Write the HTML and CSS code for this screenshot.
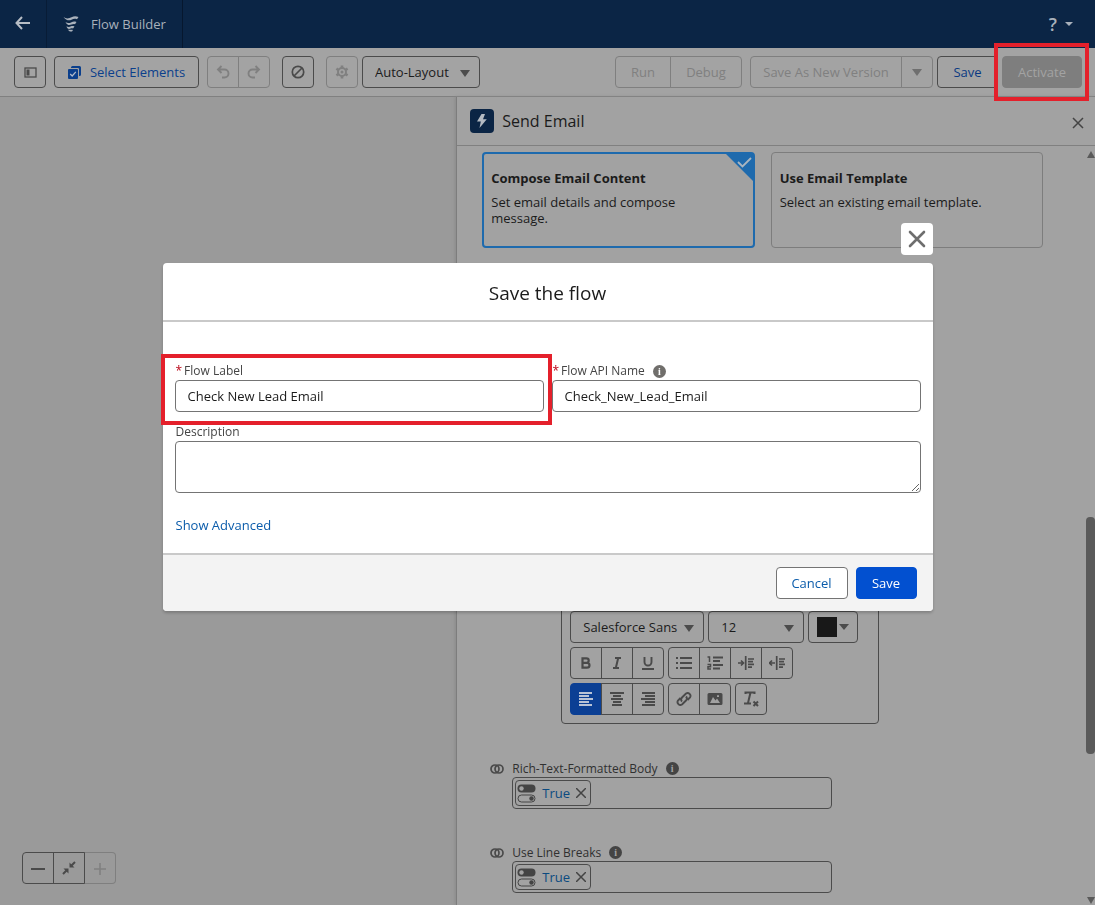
FILE: index.html
```html
<!DOCTYPE html>
<html lang="en">

<head>
  <meta charset="UTF-8" />
  <meta name="viewport" content="width=device-width, initial-scale=1.0" />
  <title>Flow Builder</title>
  <link rel="stylesheet" href="styles.css">
</head>

<body>

  <div class="app">

    <header class="top-bar">
      <a class="back" href="#" aria-label="Back">
        <svg width="16" height="14" viewBox="0 0 16 14" fill="none" stroke="currentColor" stroke-width="2"><path d="M15 7H2M7 1L1.500 7L7 13" /></svg>
      </a>
      <div class="brand">
        <svg width="16" height="16" viewBox="0 0 16 16" fill="currentColor"><path d="M.5 1C3 3 6 2.600 8.500 1.200C11 0 13 0 15.500 1L14 3.200C12 2.400 10.500 2.600 8.500 3.700C6 5 3 4.500 .5 1ZM2.500 6C4.500 7.600 6.500 7.200 8.500 6.200C10 5.400 11.500 5.300 13.500 6L12 8.200C10.800 7.800 9.800 8 8.500 8.600C6 9.700 4 9 2.500 6ZM3.500 10.200C5 11.200 6.500 11 8 10.300C9 9.900 10 9.900 11.500 10.400L10 12.400C8 12 7.500 13 6 12.900C4.800 12.700 4 12 3.500 10.200ZM5 13.600C6.500 14.300 8 13.200 10 13.900L9 15.500C7.500 15.600 6 16 5 13.600Z" /></svg>
        <span>Flow Builder</span>
      </div>
      <button type="button" class="help" aria-label="Help">?<span class="caret caret-small"></span></button>
    </header>

    <div class="toolbar">
      <button type="button" class="btn icon-btn" aria-label="Toggle toolbox">
        <svg width="13" height="11" viewBox="0 0 13 11"><rect x="1" y="1" width="11" height="9" fill="none" stroke="currentColor" stroke-width="1.300" /><rect x="2.500" y="2.500" width="3" height="6" fill="currentColor" /></svg>
      </button>
      <button type="button" class="btn btn-select">
        <svg width="13" height="13" viewBox="0 0 13 13"><path d="M3 2V1.500Q3 0 4.500 0H11.500Q13 0 13 1.500V8.500Q13 10 11.500 10H11V3Q11 2 10 2Z" fill="currentColor" /><rect y="3" width="10" height="10" rx="1" fill="currentColor" /><path d="M2.200 8L4.200 10L7.800 5.800" fill="none" stroke="#b4bccb" stroke-width="1.200" /></svg>
        Select Elements
      </button>
      <div class="btn-group">
        <button type="button" class="btn icon-btn" disabled aria-label="Undo">
          <svg width="14" height="14" viewBox="0 0 14 14" fill="none" stroke="currentColor" stroke-width="1.900"><path d="M5.500 1L2 4.500L5.500 8M2 4.500H8.500A4 4 0 0 1 8.500 12.500H6" /></svg>
        </button>
        <button type="button" class="btn icon-btn" disabled aria-label="Redo">
          <svg width="14" height="14" viewBox="0 0 14 14" fill="none" stroke="currentColor" stroke-width="1.900"><path d="M8.500 1L12 4.500L8.500 8M12 4.500H5.500A4 4 0 0 0 5.500 12.500H8" /></svg>
        </button>
      </div>
      <button type="button" class="btn icon-btn btn-ban" aria-label="Errors">
        <svg width="14" height="14" viewBox="0 0 14 14" fill="none" stroke="currentColor" stroke-width="1.700"><circle cx="7" cy="7" r="5.700" /><path d="M3 11L11 3" /></svg>
      </button>
      <button type="button" class="btn icon-btn btn-gear" disabled aria-label="Settings">
        <svg width="14" height="14" viewBox="0 0 14 14" fill="none" stroke="currentColor"><circle cx="7" cy="7" r="4" stroke-width="2" /><circle cx="7" cy="7" r="1.500" fill="currentColor" stroke="none" /><path d="M7 .5V3M7 11V13.500M1.400 3.700L3.500 5M10.500 9L12.600 10.300M1.400 10.300L3.500 9M10.500 5L12.600 3.700" stroke-width="2.600" /></svg>
      </button>
      <div class="select select-layout">
        <select aria-label="Layout"><option>Auto-Layout</option></select>
        <span class="caret"></span>
      </div>

      <div class="toolbar-actions">
        <div class="btn-group group-run">
          <button type="button" class="btn" disabled>Run</button>
          <button type="button" class="btn" disabled>Debug</button>
        </div>
        <div class="btn-group group-version">
          <button type="button" class="btn" disabled>Save As New Version</button>
          <button type="button" class="btn icon-btn" disabled aria-label="More save options"><span class="caret"></span></button>
        </div>
        <button type="button" class="btn btn-save">Save</button>
        <div class="marked marked-activate">
          <button type="button" class="btn btn-activate" disabled>Activate</button>
        </div>
      </div>
    </div>

    <div class="workspace">

      <div class="canvas">
        <div class="btn-group zoom">
          <button type="button" class="btn icon-btn" aria-label="Zoom out">
            <svg width="14" height="14" viewBox="0 0 14 14" stroke="currentColor" stroke-width="2"><path d="M0 8H14" /></svg>
          </button>
          <button type="button" class="btn icon-btn" aria-label="Zoom to fit">
            <svg width="14" height="14" viewBox="0 0 14 14" fill="none" stroke="currentColor" stroke-width="2"><path d="M13 1L9 5M1 13L5 9" /><path d="M7.500 1.500V6.500H12.500ZM1.500 7.500H6.500V12.500Z" fill="currentColor" stroke="none" /></svg>
          </button>
          <button type="button" class="btn icon-btn" disabled aria-label="Zoom in">
            <svg width="14" height="14" viewBox="0 0 14 14" stroke="currentColor" stroke-width="1.600"><path d="M1 8H13M7 2V14" /></svg>
          </button>
        </div>
      </div>

      <aside class="panel">
        <div class="panel-head">
          <span class="action-icon">
            <svg width="12" height="16" viewBox="0 0 12 16"><path d="M5.500 1L1 8.500H4.800L3.500 15L10.800 6.300H7L9 1Z" fill="currentColor" /></svg>
          </span>
          <h2>Send Email</h2>
          <button type="button" class="plain" aria-label="Close panel">
            <svg width="12" height="12" viewBox="0 0 12 12" stroke="currentColor" stroke-width="1.500"><path d="M1 1L11 11M11 1L1 11" /></svg>
          </button>
        </div>

        <div class="panel-main">
          <div class="panel-body">
            <div class="cards">
              <button type="button" class="card card-on">
                <b>Compose Email Content</b>
                <span>Set email details and compose message.</span>
                <svg class="card-check" width="29" height="29" viewBox="0 0 29 29"><path d="M0 0H29V29Z" fill="#1e6aad" /><path d="M13 9L17.500 13.500L26 5" fill="none" stroke="#a9b5c0" stroke-width="1.800" /></svg>
              </button>
              <button type="button" class="card">
                <b>Use Email Template</b>
                <span>Select an existing email template.</span>
              </button>
            </div>

            <div class="editor">
              <textarea class="editor-text" aria-label="Body"></textarea>
              <div class="editor-row">
                <div class="select select-font">
                  <select aria-label="Font"><option>Salesforce Sans</option></select>
                  <span class="caret"></span>
                </div>
                <div class="select select-size">
                  <select aria-label="Font size"><option>12</option></select>
                  <span class="caret"></span>
                </div>
                <button type="button" class="btn btn-color" aria-label="Text color"><span class="swatch"></span><span class="caret caret-mid"></span></button>
              </div>
              <div class="editor-row">
                <div class="btn-group">
                  <button type="button" class="btn icon-btn" aria-label="Bold">
                    <svg width="14" height="14" viewBox="0 0 14 14" fill="none" stroke="currentColor" stroke-width="2.200"><path d="M3.500 2.300H7.500Q9.700 2.300 9.700 4.500Q9.700 6.800 7.500 6.800H3.500ZM3.500 6.800H8Q10.500 6.800 10.500 9.300Q10.500 11.700 8 11.700H3.500Z" /></svg>
                  </button>
                  <button type="button" class="btn icon-btn" aria-label="Italic">
                    <svg width="14" height="14" viewBox="0 0 14 14" fill="none" stroke="currentColor" stroke-width="2"><path d="M5 2H11M3 12H9M8.200 2L5.800 12" /></svg>
                  </button>
                  <button type="button" class="btn icon-btn" aria-label="Underline">
                    <svg width="14" height="14" viewBox="0 0 14 14" fill="none" stroke="currentColor" stroke-width="1.900"><path d="M3.500 1V6A3.500 3.500 0 0 0 10.500 6V1M1 13H13" /></svg>
                  </button>
                </div>
                <div class="btn-group">
                  <button type="button" class="btn icon-btn" aria-label="Bulleted list">
                    <svg width="16" height="14" viewBox="0 0 16 14" stroke="currentColor" stroke-width="1.800"><path d="M0 2H2M4 2H16M0 7H2M4 7H16M0 12H2M4 12H16" /></svg>
                  </button>
                  <button type="button" class="btn icon-btn" aria-label="Numbered list">
                    <svg width="16" height="14" viewBox="0 0 16 14" fill="none" stroke="currentColor" stroke-width="1.500"><path d="M.5 1H2.500V6M.5 8.500H3.500V10.700H1V13H4" /><path d="M6 1.500H16M6 5H13M6 9H16M6 12.500H13" stroke-width="1.800" /></svg>
                  </button>
                  <button type="button" class="btn icon-btn" aria-label="Indent">
                    <svg width="16" height="14" viewBox="0 0 16 14" fill="none" stroke="currentColor" stroke-width="1.700"><path d="M0 7H5M3 4.500L5.500 7L3 9.500M7.700 0V14M10 3H16M10 5.700H15M10 8.400H16M10 11.100H14" /></svg>
                  </button>
                  <button type="button" class="btn icon-btn" aria-label="Outdent">
                    <svg width="16" height="14" viewBox="0 0 16 14" fill="none" stroke="currentColor" stroke-width="1.700"><path d="M6 7H1M3 4.500L.5 7L3 9.500M7.700 0V14M10 3H16M10 5.700H15M10 8.400H16M10 11.100H14" /></svg>
                  </button>
                </div>
              </div>
              <div class="editor-row">
                <div class="btn-group">
                  <button type="button" class="btn icon-btn btn-on" aria-label="Align left">
                    <svg width="14" height="14" viewBox="0 0 14 14" stroke="currentColor" stroke-width="1.900"><path d="M0 1H13M0 4H10M0 7H14M0 10H10M0 13H13" /></svg>
                  </button>
                  <button type="button" class="btn icon-btn" aria-label="Align center">
                    <svg width="14" height="14" viewBox="0 0 14 14" stroke="currentColor" stroke-width="1.900"><path d="M0 1H14M3 4H11M1 7H13M3 10H11M2 13H12" /></svg>
                  </button>
                  <button type="button" class="btn icon-btn" aria-label="Align right">
                    <svg width="14" height="14" viewBox="0 0 14 14" stroke="currentColor" stroke-width="1.900"><path d="M1 1H14M4 4H14M0 7H14M4 10H14M1 13H14" /></svg>
                  </button>
                </div>
                <div class="btn-group">
                  <button type="button" class="btn icon-btn" aria-label="Link">
                    <svg width="16" height="16" viewBox="0 0 16 16" fill="none" stroke="currentColor" stroke-width="1.900"><path d="M6 10.500A3 3 0 0 1 6 6.500L10 2.500A2.900 2.900 0 0 1 14 6.500L11.500 9M10 5.500A3 3 0 0 1 10 9.500L6 13.500A2.900 2.900 0 0 1 2 9.500L4.500 7" /></svg>
                  </button>
                  <button type="button" class="btn icon-btn" aria-label="Image">
                    <svg width="16" height="14" viewBox="0 0 16 14"><path fill-rule="evenodd" d="M2 1H14Q15.500 1 15.500 2.500V11.500Q15.500 13 14 13H2Q.5 13 .5 11.500V2.500Q.5 1 2 1ZM3 11H13L10 6.500L8.500 8.500L6 5ZM10 3.200H12V5H10Z" fill="currentColor" /></svg>
                  </button>
                </div>
                <button type="button" class="btn icon-btn" aria-label="Remove formatting">
                  <svg width="16" height="16" viewBox="0 0 16 16" fill="none" stroke="currentColor" stroke-width="2"><path d="M2.500 3V1.500H11.500V3M7.500 1.500L5 12M1 12.500H8M10.500 10.500L15 15M15 10.500L10.500 15" /></svg>
                </button>
              </div>
            </div>

            <div class="field">
              <svg class="merge" width="14" height="10" viewBox="0 0 14 10" fill="none" stroke="currentColor" stroke-width="1.700"><circle cx="5" cy="5" r="4" /><circle cx="9" cy="5" r="4" /></svg>
              <label for="rich-text">Rich-Text-Formatted Body</label>
              <span class="info">i</span>
              <div class="pill-box">
                <span class="pill">
                  <svg width="19" height="19" viewBox="0 0 19 19"><rect x=".5" y=".5" width="18" height="8" rx="4" fill="currentColor" /><circle cx="4.500" cy="4.500" r="2.200" fill="#a2a2a2" /><rect x="1" y="11" width="17" height="7" rx="3.500" fill="none" stroke="currentColor" /><circle cx="14.500" cy="14.500" r="2.200" fill="currentColor" /></svg>
                  <a href="#">True</a>
                  <button type="button" class="plain" aria-label="Remove">
                    <svg width="10" height="10" viewBox="0 0 10 10" stroke="currentColor" stroke-width="1.500"><path d="M0 0L10 10M10 0L0 10" /></svg>
                  </button>
                </span>
                <input type="text" id="rich-text" />
              </div>
            </div>

            <div class="field">
              <svg class="merge" width="14" height="10" viewBox="0 0 14 10" fill="none" stroke="currentColor" stroke-width="1.700"><circle cx="5" cy="5" r="4" /><circle cx="9" cy="5" r="4" /></svg>
              <label for="line-breaks">Use Line Breaks</label>
              <span class="info">i</span>
              <div class="pill-box">
                <span class="pill">
                  <svg width="19" height="19" viewBox="0 0 19 19"><rect x=".5" y=".5" width="18" height="8" rx="4" fill="currentColor" /><circle cx="4.500" cy="4.500" r="2.200" fill="#a2a2a2" /><rect x="1" y="11" width="17" height="7" rx="3.500" fill="none" stroke="currentColor" /><circle cx="14.500" cy="14.500" r="2.200" fill="currentColor" /></svg>
                  <a href="#">True</a>
                  <button type="button" class="plain" aria-label="Remove">
                    <svg width="10" height="10" viewBox="0 0 10 10" stroke="currentColor" stroke-width="1.500"><path d="M0 0L10 10M10 0L0 10" /></svg>
                  </button>
                </span>
                <input type="text" id="line-breaks" />
              </div>
            </div>
          </div>

          <div class="scrollbar">
            <span class="scroll-up"></span>
            <span class="scroll-before"></span>
            <span class="scroll-thumb"></span>
            <span class="scroll-after"></span>
            <span class="scroll-down"></span>
          </div>
        </div>
      </aside>

    </div>
  </div>

  <div class="overlay">
    <div class="dialog-wrap">
      <button type="button" class="dialog-close" aria-label="Close">
        <svg width="18" height="18" viewBox="0 0 18 18" stroke="currentColor" stroke-width="2.600" stroke-linecap="round"><path d="M2 2L16 16M16 2L2 16" /></svg>
      </button>
      <form class="dialog" role="dialog" aria-labelledby="dialog-title">
        <h1 id="dialog-title">Save the flow</h1>
        <div class="dialog-body">
          <div class="form-grid">
            <div class="form-item marked marked-label">
              <label for="flow-label"><em>*</em>Flow Label</label>
              <input type="text" id="flow-label" value="Check New Lead Email" />
            </div>
            <div class="form-item">
              <div class="label-row">
                <label for="api-name"><em>*</em>Flow API Name</label>
                <span class="info">i</span>
              </div>
              <input type="text" id="api-name" value="Check_New_Lead_Email" />
            </div>
          </div>
          <div class="form-item">
            <label for="description">Description</label>
            <textarea id="description"></textarea>
          </div>
          <a class="advanced" href="#">Show Advanced</a>
        </div>
        <div class="dialog-foot">
          <button type="button" class="btn btn-cancel">Cancel</button>
          <button type="submit" class="btn btn-primary">Save</button>
        </div>
      </form>
    </div>
  </div>

</body>

</html>
```
FILE: styles.css
```css
* {
    box-sizing: border-box;
}
html, body {
    margin: 0;
    padding: 0;
    height: 100%;
    overflow: hidden;
}
body {
    font-family: "Open Sans", "Noto Sans", sans-serif;
    font-size: 13px;
    color: #1b1b1b;
    background: #a2a2a2;
}
button, input, select, textarea {
    margin: 0;
    font-family: inherit;
    font-size: inherit;
    color: inherit;
    outline: 0;
}
button {
    cursor: pointer;
}
a {
    text-decoration: none;
}
svg {
    flex: none;
}
.app {
    height: 100vh;
    display: flex;
    flex-direction: column;
}

/* header */
.top-bar {
    flex: none;
    height: 48px;
    display: flex;
    color: #a9b1bb;
    background: #0b2545;
}
.back {
    width: 47px;
    display: flex;
    align-items: center;
    justify-content: center;
    padding-bottom: 2px;
    color: #b7bdc5;
    border-right: 1px solid #081c36;
}
.brand {
    display: flex;
    align-items: center;
    gap: 12px;
    padding: 0 16px;
    border-right: 1px solid #06172e;
}
.help {
    margin-left: auto;
    padding: 0 22px 0 0;
    display: flex;
    align-items: center;
    gap: 8px;
    font-size: 18px;
    font-weight: 600;
    border: 0;
    background: none;
}

/* buttons */
.btn {
    height: 32px;
    padding: 0 16px;
    display: flex;
    align-items: center;
    justify-content: center;
    white-space: nowrap;
    border: 1px solid #4b4b4b;
    border-radius: 4px;
    background: none;
}
.btn:disabled {
    color: #808080;
    border-color: #7f7f7f;
    cursor: default;
}
.icon-btn {
    width: 32px;
    padding: 0;
    color: #4a4a4a;
}
.btn-group {
    display: flex;
}
.btn-group .btn + .btn {
    margin-left: -1px;
    border-top-left-radius: 0;
    border-bottom-left-radius: 0;
}
.btn-group .btn:not(:last-child) {
    border-top-right-radius: 0;
    border-bottom-right-radius: 0;
}
.plain {
    padding: 0;
    display: flex;
    color: #444;
    border: 0;
    background: none;
}
.caret {
    border: 5px solid transparent;
    border-top: 7px solid #4c4c4c;
    border-bottom: 0;
}
.btn:disabled .caret {
    border-top-color: #6f6f6f;
}
.caret-small {
    border-width: 4px 4px 0;
    border-top-color: #a9b1bb;
}
.caret-mid {
    border-width: 6px 5px 0;
}
.select {
    position: relative;
    height: 32px;
}
.select select {
    width: 100%;
    height: 100%;
    padding: 0 12px;
    appearance: none;
    border: 1px solid #4b4b4b;
    border-radius: 4px;
    background: none;
}
.select .caret {
    position: absolute;
    top: 14px;
    right: 10px;
    pointer-events: none;
}

/* toolbar */
.toolbar {
    flex: none;
    padding: 8px 13px 8px 14px;
    display: flex;
    border-bottom: 1px solid #808080;
    background: #a3a3a3;
}
.btn-select {
    width: 145px;
    margin: 0 8px;
    gap: 9px;
    color: #0b3f8c;
}
.btn-ban {
    margin: 0 12px;
}
.btn-gear {
    margin-right: 4px;
}
.select-layout {
    width: 118px;
}
.toolbar-actions {
    margin-left: auto;
    display: flex;
}
.group-run .btn:first-child {
    width: 56px;
}
.group-run .btn:last-child {
    width: 72px;
}
.group-version {
    margin: 0 4px 0 8px;
}
.group-version .btn:first-child {
    width: 152px;
}
.btn-save {
    width: 61px;
    margin-right: 4px;
    color: #0a3a82;
}
.btn-activate:disabled {
    width: 80px;
    color: #a3a3a3;
    border-color: #7e7e7e;
    background: #7e7e7e;
}

/* red frames round the two highlighted controls */
.marked {
    position: relative;
}
.marked::after {
    content: "";
    position: absolute;
    border: 4px solid #e4202b;
    pointer-events: none;
}
.marked-activate::after {
    inset: -13px -7px -13px -8px;
}
.marked-label::after {
    inset: -8px -8px -13px -14px;
}

/* workspace */
.workspace {
    flex: 1;
    min-height: 0;
    display: grid;
    grid-template-columns: minmax(0, 5fr) minmax(0, 7fr);
    grid-template-rows: minmax(0, 1fr);
}
.canvas {
    padding: 0 22px 21px;
    display: flex;
    align-items: flex-end;
    background: #9a9a9a;
}
.zoom .btn:disabled {
    border-left-color: #4b4b4b;
}
.panel {
    display: flex;
    flex-direction: column;
    border-left: 1px solid #7d7d7d;
    box-shadow: -1px 0 3px #8a8a8a;
}
.panel-head {
    flex: none;
    height: 49px;
    padding: 0 11px 0 13px;
    display: flex;
    align-items: center;
    gap: 8px;
    border-bottom: 1px solid #808080;
}
.panel-head h2 {
    margin: 0;
    font-size: 16px;
    font-weight: 400;
}
.panel-head .plain {
    margin-left: auto;
    padding-top: 3px;
}
.action-icon {
    width: 24px;
    height: 24px;
    display: flex;
    align-items: center;
    justify-content: center;
    color: #b4bac2;
    border-radius: 4px;
    background: #0b2545;
}
.panel-main {
    flex: 1;
    min-height: 0;
    display: flex;
}
.panel-body {
    flex: 1;
    padding: 6px 43px 0 25px;
    overflow: hidden;
}
.cards {
    display: grid;
    grid-template-columns: 1fr 1fr;
    gap: 16px;
}
.card {
    position: relative;
    height: 96px;
    padding: 17px 24px 0 8px;
    display: flex;
    flex-direction: column;
    gap: 8px;
    text-align: left;
    line-height: 16px;
    border: 1px solid #7d7d7d;
    border-radius: 4px;
    background: none;
}
.card-on {
    padding: 16px 60px 0 7px;
    border: 2px solid #1e6aad;
}
.card-check {
    position: absolute;
    top: -1px;
    right: -1px;
}
.editor {
    width: 318px;
    margin: 152px 0 0 79px;
    padding: 0 8px 8px;
    display: flex;
    flex-direction: column;
    gap: 4px;
    border: 1px solid #4b4b4b;
    border-radius: 4px;
}
.editor-text {
    height: 206px;
    border: 0;
    resize: none;
    background: none;
}
.editor-row {
    display: flex;
    gap: 4px;
}
.select-font {
    width: 134px;
}
.select-size {
    width: 96px;
}
.btn-color {
    width: 50px;
    padding: 0;
    gap: 2px;
}
.swatch {
    width: 20px;
    height: 20px;
    background: #181818;
}
.btn-on {
    color: #b8c3d6;
    border-color: #0b3f94;
    background: #0b3f94;
}
.info {
    width: 13px;
    height: 13px;
    display: flex;
    align-items: center;
    justify-content: center;
    font: bold 10px/13px "Liberation Serif", serif;
    color: #a3a3a3;
    border-radius: 50%;
    background: #444;
}
.field {
    margin: 35px 0 0 8px;
    display: grid;
    grid-template-columns: 14px auto 1fr;
    column-gap: 8px;
    align-items: center;
    color: #303030;
}
.editor + .field {
    margin-top: 36px;
}
.field label {
    font-size: 12px;
    line-height: 17px;
}
.merge {
    color: #4a4a4a;
}
.pill-box {
    grid-column: 2 / 4;
    width: 320px;
    height: 32px;
    padding: 2px;
    display: flex;
    border: 1px solid #4b4b4b;
    border-radius: 4px;
}
.pill-box input {
    flex: 1;
    min-width: 0;
    border: 0;
    background: none;
}
.pill {
    width: 76px;
    padding: 0 6px 0 1px;
    display: flex;
    align-items: center;
    gap: 6px;
    color: #444;
    border: 1px solid #4b4b4b;
    border-radius: 4px;
}
.pill a {
    color: #0b4a80;
}
.pill .plain {
    margin-left: auto;
}
.scrollbar {
    width: 9px;
    display: flex;
    flex-direction: column;
    align-items: center;
    padding: 5px 0 1px;
}
.scroll-up, .scroll-down {
    border: 4px solid transparent;
}
.scroll-up {
    border-top: 0;
    border-bottom: 7px solid #5a5a5a;
}
.scroll-down {
    border-bottom: 0;
    border-top: 7px solid #5a5a5a;
}
.scroll-before {
    flex: 359;
}
.scroll-thumb {
    flex: 237;
    width: 9px;
    border-radius: 4px;
    background: #5a5a5a;
}
.scroll-after {
    flex: 143;
}

/* dialog */
.overlay {
    position: fixed;
    inset: 0;
    padding: 223px 16px 0;
    display: flex;
    justify-content: center;
    align-items: flex-start;
    pointer-events: none;
}
.dialog-wrap {
    width: 100%;
    max-width: 770px;
    display: flex;
    flex-direction: column;
    align-items: flex-end;
    gap: 8px;
    pointer-events: auto;
}
.dialog-close {
    width: 32px;
    height: 32px;
    padding: 0;
    display: flex;
    align-items: center;
    justify-content: center;
    color: #6e6e6e;
    border: 0;
    border-radius: 4px;
    background: #fff;
}
.dialog {
    width: 100%;
    border-radius: 4px;
    background: #fff;
    box-shadow: 0 2px 3px rgba(0, 0, 0, 0.2);
}
.dialog h1 {
    margin: 0;
    padding: 18px 0 14px;
    font-size: 19px;
    font-weight: 400;
    line-height: 25px;
    text-align: center;
    border-bottom: 2px solid #c9c9c9;
}
.dialog-body {
    padding: 40px 12px 18px;
}
.form-grid {
    display: grid;
    grid-template-columns: 1fr 1fr;
    gap: 8px;
    margin-bottom: 11px;
}
.form-item {
    display: flex;
    flex-direction: column;
}
.form-item label {
    padding-left: 1px;
    font-size: 12px;
    line-height: 18px;
    color: #444;
}
.form-item em {
    margin-right: 2px;
    font-style: normal;
    color: #ba0517;
}
.form-item input {
    width: 100%;
    height: 32px;
    padding: 0 12px;
    border: 1px solid #747474;
    border-radius: 4px;
    background: #fff;
}
.form-item textarea {
    height: 52px;
    padding: 8px 12px;
    border: 1px solid #747474;
    border-radius: 4px;
    background: #fff;
}
.label-row {
    display: flex;
    align-items: center;
    gap: 8px;
}
.label-row .info {
    color: #fff;
    background: #706e6b;
}
.advanced {
    display: block;
    margin-top: 23px;
    padding-left: 1px;
    line-height: 19px;
    color: #0b5cab;
}
.dialog-foot {
    padding: 12px 16px;
    display: flex;
    justify-content: flex-end;
    gap: 8px;
    border-top: 2px solid #c9c9c9;
    border-radius: 0 0 4px 4px;
    background: #f3f3f3;
}
.btn-cancel {
    width: 72px;
    color: #0b5cab;
    border-color: #747474;
    background: #fff;
}
.btn-primary {
    width: 61px;
    color: #fff;
    border-color: #0250d0;
    background: #0250d0;
}
```
